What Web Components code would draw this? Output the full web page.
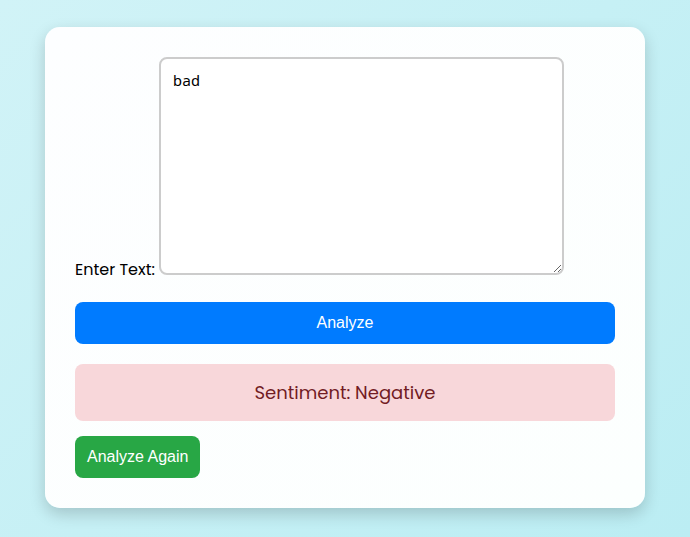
<!DOCTYPE html>
<html lang="en">
<head>
<meta charset="utf-8">
<title>Sentiment Analysis</title>
<style>
html { min-height: 100%; background: linear-gradient(135deg, #d1f3f7, #bbedf3); }
body { margin: 0; padding: 27px 45px; font: 16px/24px Poppins, Inter, "Liberation Sans", sans-serif; color: #000; }
</style>
</head>
<body>
<sentiment-card>
  <text-field>Enter Text:</text-field>
  <action-button wide>Analyze</action-button>
  <sentiment-result>Sentiment: Negative</sentiment-result>
  <action-button tone="success">Analyze Again</action-button>
</sentiment-card>
<script>
class Base extends HTMLElement {
  constructor() {
    super();
    this.attachShadow({ mode: "open" }).innerHTML = this.constructor.markup;
  }
}
customElements.define("sentiment-card", class extends Base {
  static markup = `<style>
    :host { display: flex; flex-direction: column; align-items: flex-start; box-sizing: border-box;
      max-width: 600px; margin: 0 auto; padding: 30px; border-radius: 15px;
      background: linear-gradient(135deg, #fdfeff, #fcfffe);
      box-shadow: 0 6px 16px rgba(0, 0, 0, .18); }
  </style><slot></slot>`;
});
customElements.define("text-field", class extends Base {
  static markup = `<style>
    :host { display: flex; align-items: flex-end; gap: 4px; width: 100%; margin-bottom: 27px; }
    label { width: 80px; white-space: nowrap; line-height: 10px; }
    textarea { box-sizing: border-box; width: 75%; height: 218px; margin: 0; padding: 12px;
      border: 2px solid #ccc; border-radius: 8px; background: #fff; color: #000; resize: both;
      font: 15px/18px Consolas, "Noto Sans Mono", "DejaVu Sans Mono", monospace; }
  </style><label for="text"><slot></slot></label><textarea id="text">bad</textarea>`;
});
customElements.define("action-button", class extends Base {
  static markup = `<style>
    :host { display: block; }
    :host([wide]) { width: 100%; }
    button { width: 100%; padding: 12px; border: 0; border-radius: 8px; background: #007bff; color: #fff;
      font: 16px/18px Arial, "Liberation Sans", sans-serif; cursor: pointer; }
    :host([tone="success"]) button { background: #28a745; }
  </style><button type="button"><slot></slot></button>`;
});
customElements.define("sentiment-result", class extends Base {
  static markup = `<style>
    :host { display: block; box-sizing: border-box; width: 100%; margin: 20px 0 15px; padding: 15px;
      border-radius: 8px; background: #f8d7da; color: #721c24; font-size: 18px; line-height: 27px; text-align: center; }
  </style><output><slot></slot></output>`;
});
</script>
</body>
</html>
